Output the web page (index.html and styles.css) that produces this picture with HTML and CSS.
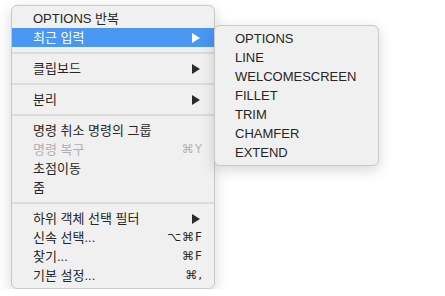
FILE: index.html
```html
<!DOCTYPE html>
<html lang="ko">
<head>
  <meta charset="UTF-8">
  <title>Context Menu</title>
  <link rel="stylesheet" href="styles.css">
</head>
<body>
  <div class="menus">

    <!-- Main menu -->
    <div class="menu main-menu">
      <div class="item">OPTIONS 반복</div>
      <div class="item active">최근 입력 <svg class="arrow" viewBox="0 0 8 10"><path d="M0 0 L8 5 L0 10 Z"/></svg></div>
      <div class="sep"></div>
      <div class="item">클립보드 <svg class="arrow" viewBox="0 0 8 10"><path d="M0 0 L8 5 L0 10 Z"/></svg></div>
      <div class="sep"></div>
      <div class="item">분리 <svg class="arrow" viewBox="0 0 8 10"><path d="M0 0 L8 5 L0 10 Z"/></svg></div>
      <div class="sep"></div>
      <div class="item">명령 취소 명령의 그룹</div>
      <div class="item disabled">명령 복구 <span class="key">⌘Y</span></div>
      <div class="item">초점이동</div>
      <div class="item">줌</div>
      <div class="sep"></div>
      <div class="item">하위 객체 선택 필터 <svg class="arrow" viewBox="0 0 8 10"><path d="M0 0 L8 5 L0 10 Z"/></svg></div>
      <div class="item">신속 선택... <span class="key">⌥⌘F</span></div>
      <div class="item">찾기... <span class="key">⌘F</span></div>
      <div class="item">기본 설정... <span class="key">⌘,</span></div>
    </div>

    <!-- Recent input submenu -->
    <div class="menu sub-menu">
      <div class="item">OPTIONS</div>
      <div class="item">LINE</div>
      <div class="item">WELCOMESCREEN</div>
      <div class="item">FILLET</div>
      <div class="item">TRIM</div>
      <div class="item">CHAMFER</div>
      <div class="item">EXTEND</div>
    </div>

  </div>
</body>
</html>
```

FILE: styles.css
```css
/* Global */
body {
  margin: 0;
  background: #fff;
  font-family: "Liberation Sans", "Noto Sans CJK KR", sans-serif;
  font-size: 13px;
  color: #262626;
}

.menus {
  display: flex;
  align-items: flex-start;
  padding: 5px 0 0 11px;
}

/* Menu panels */
.menu {
  background: #f0f0f0;
  border: 1px solid #c9c9c9;
  border-radius: 6px;
  box-shadow: 0 4px 14px rgba(0,0,0,0.16);
  padding: 3px 0;
  box-sizing: border-box;
}
.main-menu {
  width: 204px;
  height: 284px;
}
.sub-menu {
  width: 165px;
  height: 141px;
  margin-top: 20px;
  margin-left: -1px;
}

.item {
  height: 19px;
  display: flex;
  align-items: center;
  justify-content: space-between;
  padding: 0 11px 0 21px;
  line-height: 19px;
  white-space: nowrap;
}
.sub-menu .item { padding-left: 20px; }

.item.active {
  background: #4996f3;
  color: #fff;
}
.item.active .arrow { fill: #fff; }
.item.disabled { color: #b0b0b0; }

.arrow {
  width: 8px;
  height: 10px;
  fill: #2a2a2a;
  margin-right: 3px;
}
.key {
  font-family: "DejaVu Sans", "Liberation Sans", sans-serif;
  font-size: 12px;
  letter-spacing: 1px;
}

.sep {
  height: 2px;
  background: #dcdcdc;
  margin: 5px 0;
}
```
